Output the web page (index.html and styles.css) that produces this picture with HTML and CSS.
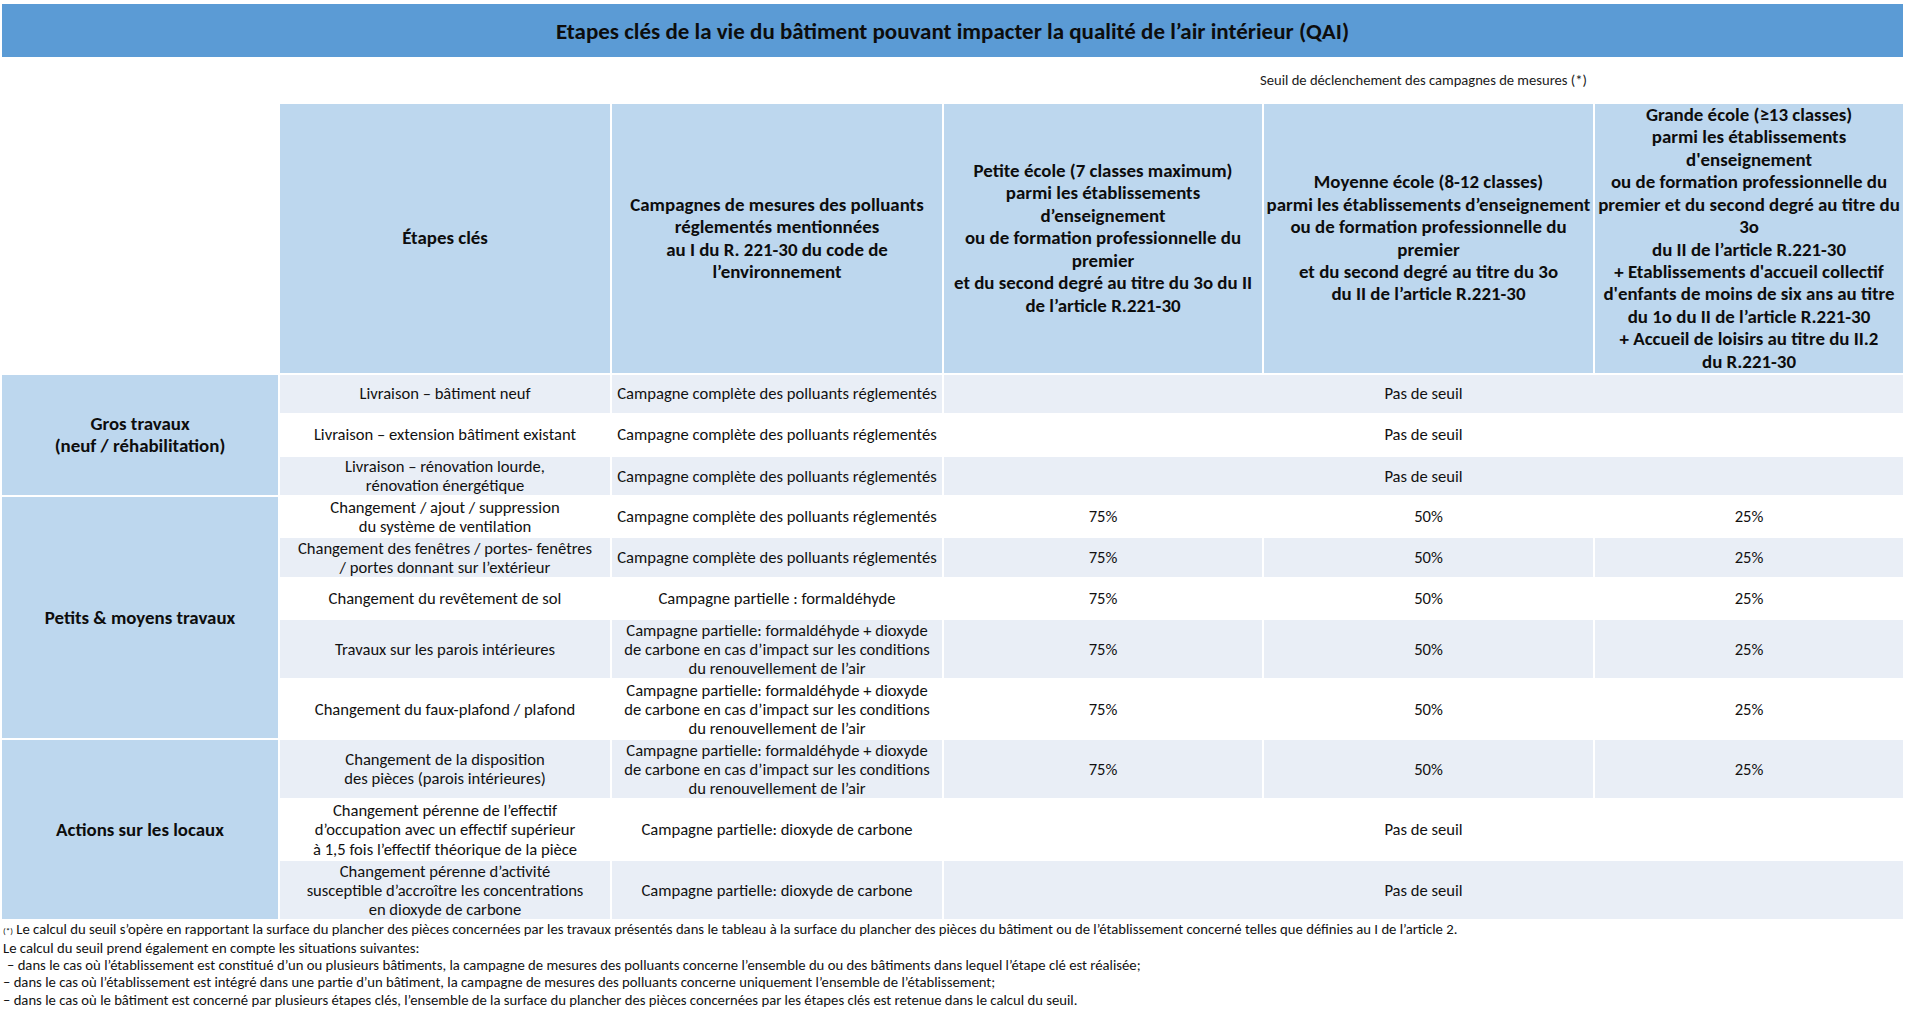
FILE: index.html
```html
<!DOCTYPE html>
<html lang="fr">
<head>
<meta charset="utf-8">
<title>Etapes clés QAI</title>
<link rel="stylesheet" href="styles.css">
</head>
<body>
<div class="title-bar">Etapes clés de la vie du bâtiment pouvant impacter la qualité de l’air intérieur (QAI)</div>
<table class="qai">
  <colgroup>
    <col class="c0"><col class="c1"><col class="c2"><col class="c3"><col class="c4"><col class="c5">
  </colgroup>
  <tr class="sub-row">
    <td colspan="3"></td>
    <td colspan="3" class="subtitle">Seuil de déclenchement des campagnes de mesures (*)</td>
  </tr>
  <tr class="head-row">
    <td class="blank"></td>
    <th>Étapes clés</th>
    <th>Campagnes de mesures des polluants<br>réglementés mentionnées<br>au I du R. 221-30 du code de<br>l’environnement</th>
    <th>Petite école (7 classes maximum)<br>parmi les établissements<br>d’enseignement<br>ou de formation professionnelle du<br>premier<br>et du second degré au titre du 3o du II<br>de l’article R.221-30</th>
    <th>Moyenne école (8-12 classes)<br>parmi les établissements d’enseignement<br>ou de formation professionnelle du<br>premier<br>et du second degré au titre du 3o<br>du II de l’article R.221-30</th>
    <th>Grande école (≥13 classes)<br>parmi les établissements<br>d'enseignement<br>ou de formation professionnelle du<br>premier et du second degré au titre du<br>3o<br>du II de l’article R.221-30<br>+ Etablissements d'accueil collectif<br>d'enfants de moins de six ans au titre<br>du 1o du II de l’article R.221-30<br>+ Accueil de loisirs au titre du II.2<br>du R.221-30</th>
  </tr>
  <tr class="stripe h38">
    <td rowspan="3" class="group">Gros travaux<br>(neuf / réhabilitation)</td>
    <td>Livraison – bâtiment neuf</td>
    <td>Campagne complète des polluants réglementés</td>
    <td colspan="3">Pas de seuil</td>
  </tr>
  <tr class="h40">
    <td>Livraison – extension bâtiment existant</td>
    <td>Campagne complète des polluants réglementés</td>
    <td colspan="3">Pas de seuil</td>
  </tr>
  <tr class="stripe h38">
    <td>Livraison – rénovation lourde,<br>rénovation énergétique</td>
    <td>Campagne complète des polluants réglementés</td>
    <td colspan="3">Pas de seuil</td>
  </tr>
  <tr class="h39">
    <td rowspan="5" class="group">Petits &amp; moyens travaux</td>
    <td>Changement / ajout / suppression<br>du système de ventilation</td>
    <td>Campagne complète des polluants réglementés</td>
    <td>75%</td><td>50%</td><td>25%</td>
  </tr>
  <tr class="stripe h39">
    <td>Changement des fenêtres / portes- fenêtres<br>/ portes donnant sur l’extérieur</td>
    <td>Campagne complète des polluants réglementés</td>
    <td>75%</td><td>50%</td><td>25%</td>
  </tr>
  <tr class="h39">
    <td>Changement du revêtement de sol</td>
    <td>Campagne partielle : formaldéhyde</td>
    <td>75%</td><td>50%</td><td>25%</td>
  </tr>
  <tr class="stripe h58">
    <td>Travaux sur les parois intérieures</td>
    <td>Campagne partielle: formaldéhyde + dioxyde<br>de carbone en cas d’impact sur les conditions<br>du renouvellement de l’air</td>
    <td>75%</td><td>50%</td><td>25%</td>
  </tr>
  <tr class="h58">
    <td>Changement du faux-plafond / plafond</td>
    <td>Campagne partielle: formaldéhyde + dioxyde<br>de carbone en cas d’impact sur les conditions<br>du renouvellement de l’air</td>
    <td>75%</td><td>50%</td><td>25%</td>
  </tr>
  <tr class="stripe h58">
    <td rowspan="3" class="group">Actions sur les locaux</td>
    <td>Changement de la disposition<br>des pièces (parois intérieures)</td>
    <td>Campagne partielle: formaldéhyde + dioxyde<br>de carbone en cas d’impact sur les conditions<br>du renouvellement de l’air</td>
    <td>75%</td><td>50%</td><td>25%</td>
  </tr>
  <tr class="h59">
    <td>Changement pérenne de l’effectif<br>d’occupation avec un effectif supérieur<br>à 1,5 fois l’effectif théorique de la pièce</td>
    <td>Campagne partielle: dioxyde de carbone</td>
    <td colspan="3">Pas de seuil</td>
  </tr>
  <tr class="stripe h58">
    <td>Changement pérenne d’activité<br>susceptible d’accroître les concentrations<br>en dioxyde de carbone</td>
    <td>Campagne partielle: dioxyde de carbone</td>
    <td colspan="3">Pas de seuil</td>
  </tr>
</table>
<div class="notes">
  <p><span class="star">(*)</span> Le calcul du seuil s’opère en rapportant la surface du plancher des pièces concernées par les travaux présentés dans le tableau à la surface du plancher des pièces du bâtiment ou de l’établissement concerné telles que définies au I de l’article 2.</p>
  <p>Le calcul du seuil prend également en compte les situations suivantes:</p>
  <p class="indent">– dans le cas où l’établissement est constitué d’un ou plusieurs bâtiments, la campagne de mesures des polluants concerne l’ensemble du ou des bâtiments dans lequel l’étape clé est réalisée;</p>
  <p>– dans le cas où l’établissement est intégré dans une partie d’un bâtiment, la campagne de mesures des polluants concerne uniquement l’ensemble de l’établissement;</p>
  <p>– dans le cas où le bâtiment est concerné par plusieurs étapes clés, l’ensemble de la surface du plancher des pièces concernées par les étapes clés est retenue dans le calcul du seuil.</p>
</div>
</body>
</html>
```

FILE: styles.css
```css
html, body {
  margin: 0;
  padding: 0;
  background: #ffffff;
}
body {
  font-family: Carlito, Calibri, Lato, "Open Sans", sans-serif;
  color: #111111;
  padding-top: 4px;
}
.title-bar {
  margin: 0 2px;
  height: 53px;
  background: #5b9bd5;
  color: #0d0d0d;
  font-weight: bold;
  font-size: 23px;
  display: flex;
  align-items: center;
  justify-content: center;
}
.qai {
  border-collapse: separate;
  border-spacing: 2px;
  table-layout: fixed;
  width: 1905px;
  font-size: 16.6px;
  line-height: 19.2px;
}
.c0 { width: 276px; }
.c1 { width: 330px; }
.c2 { width: 330px; }
.c3 { width: 318px; }
.c4 { width: 329px; }
.c5 { width: 308px; }
.qai td, .qai th {
  padding: 0;
  text-align: center;
  vertical-align: middle;
  white-space: nowrap;
  overflow: hidden;
}
.sub-row td {
  height: 43px;
  font-size: 14.6px;
  line-height: 17px;
}
.subtitle {
  color: #1a1a1a;
  padding-top: 2px;
}
.head-row th {
  height: 269px;
  background: #bdd7ee;
  font-size: 18.9px;
  line-height: 22.4px;
  font-weight: bold;
  color: #0d0d0d;
}
.head-row .blank {
  background: transparent;
}
.qai .group {
  background: #bdd7ee;
  font-weight: bold;
  font-size: 18.9px;
  line-height: 22.5px;
  color: #0d0d0d;
}
.stripe td {
  background: #e9eef6;
}
.h38 td { height: 38px; }
.h39 td { height: 39px; }
.h40 td { height: 40px; }
.h58 td { height: 58px; }
.h59 td { height: 59px; }
.notes {
  font-size: 14.7px;
  line-height: 17.3px;
  color: #111111;
  padding-left: 3px;
}
.notes p {
  margin: 0;
  white-space: nowrap;
}
.notes .indent {
  padding-left: 4px;
}
.star {
  font-size: 9px;
}
```
